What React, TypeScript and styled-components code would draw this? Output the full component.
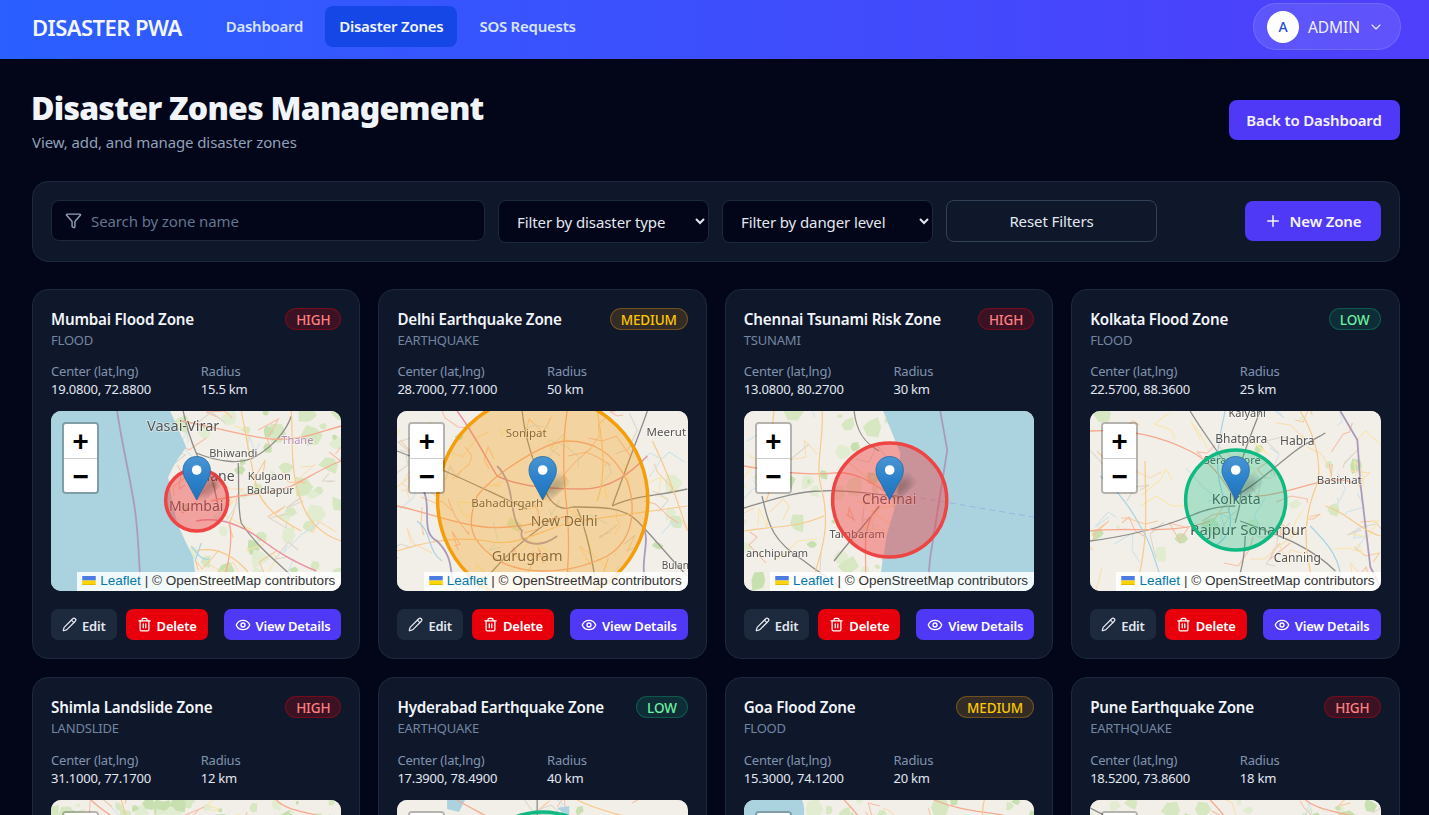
// App.tsx
import React from 'react';
import styled, { createGlobalStyle } from 'styled-components';
import { ChevronDown, Eye, Filter, Pencil, Plus, Trash2 } from 'lucide-react';

type Level = 'HIGH' | 'MEDIUM' | 'LOW';
type RoadKind = 'motorway' | 'trunk' | 'primary' | 'rail' | 'border' | 'river' | 'sea';
type Label = [string, number, number, number, string?];

interface Scene {
  seed: number;
  radius: number;
  blobs: number;
  minor: number;
  water: string[];
  roads: [RoadKind, string][];
  labels: Label[];
}

interface Zone {
  name: string;
  type: string;
  level: Level;
  center: string;
  radius: string;
  scene: Scene;
}

const levelColors: Record<Level, { text: string; bg: string; border: string; circle: string; fill: number }> = {
  HIGH: { text: '#ff7f7f', bg: 'rgba(231,0,11,0.2)', border: 'rgba(231,0,11,0.35)', circle: '#ef4444', fill: 0.45 },
  MEDIUM: { text: '#fdc700', bg: 'rgba(245,158,11,0.16)', border: 'rgba(245,158,11,0.32)', circle: '#f59e0b', fill: 0.33 },
  LOW: { text: '#6ff0a0', bg: 'rgba(16,185,129,0.14)', border: 'rgba(16,185,129,0.32)', circle: '#10b981', fill: 0.3 },
};

const roadStyles: Record<RoadKind, { color: string; width: number; dash?: string }> = {
  motorway: { color: '#e98fa0', width: 1.4 },
  trunk: { color: '#f6a98e', width: 1.3 },
  primary: { color: '#f8c98a', width: 1.2 },
  rail: { color: '#8f8d88', width: 1.3 },
  border: { color: '#ab9bbb', width: 1.8 },
  river: { color: '#a9d3e4', width: 1.2 },
  sea: { color: '#9db4e0', width: 1, dash: '6 4' },
};

const scenes: Record<string, Scene> = {
  mumbai: {
    seed: 11,
    radius: 31,
    blobs: 110,
    minor: 60,
    water: ['M0 0H119L128 20L135 36L124 52L117 66L121 90L126 112L135 132L142 146L146 180H0Z'],
    roads: [
      ['border', 'M66 0C72 40 80 70 84 100C88 130 88 160 90 180'],
      ['rail', 'M132 0C136 20 140 30 145 42C150 55 158 60 162 72L168 100'],
      ['rail', 'M145 42C165 50 190 55 205 45C222 35 235 20 240 5'],
      ['rail', 'M187 52C188 75 186 95 190 112C205 135 225 150 240 165'],
      ['motorway', 'M145 110C170 105 190 115 205 125C225 140 240 150 265 160'],
      ['trunk', 'M130 10C160 15 190 25 220 28C250 30 270 20 290 15'],
      ['trunk', 'M160 90C190 82 215 85 240 75C260 65 275 55 290 50'],
      ['trunk', 'M178 110C182 130 178 150 170 180'],
      ['primary', 'M190 0C195 25 198 45 205 75C210 95 230 110 250 120'],
      ['primary', 'M145 140C165 135 185 145 200 165'],
      ['primary', 'M240 0C242 30 238 60 250 90C256 110 272 125 290 130'],
      ['river', 'M140 135C146 142 150 150 158 148M150 132L144 150'],
    ],
    labels: [
      ['Vasai-Virar', 132, 20, 14.5], ['Bhiwandi', 182, 46, 11], ['Thane', 246, 33, 11, '#b48bb0'],
      ['Thane', 163, 70, 14], ['Kulgaon', 218, 69, 11], ['Badlapur', 219, 83, 11], ['Mumbai', 145, 100, 14],
    ],
  },
  delhi: {
    seed: 23,
    radius: 105,
    blobs: 8,
    minor: 70,
    water: [],
    roads: [
      ['rail', 'M125 0C128 30 138 55 148 80C155 95 165 100 175 96'],
      ['rail', 'M0 40C40 55 80 75 130 98'],
      ['rail', 'M175 96C200 96 225 95 240 110C255 125 275 150 290 165'],
      ['rail', 'M215 95C235 85 260 85 290 78'],
      ['rail', 'M180 98C190 120 195 150 200 180'],
      ['rail', 'M160 105C130 125 100 150 80 180'],
      ['rail', 'M250 0C245 15 235 40 215 95'],
      ['motorway', 'M60 0C75 20 85 40 100 65C120 75 150 78 185 78C215 78 235 60 250 45'],
      ['trunk', 'M170 30C150 30 100 60 80 85C68 115 75 130 95 145C120 165 170 165 210 145C235 130 240 100 230 70C215 40 195 30 170 30'],
      ['trunk', 'M170 0C165 30 165 60 170 100C172 130 172 150 168 180'],
      ['trunk', 'M0 95C25 100 50 110 80 115C110 120 140 112 170 105'],
      ['primary', 'M0 140C30 130 60 125 90 130C120 138 150 115 180 110C220 105 255 100 290 95'],
      ['primary', 'M200 0C205 30 210 60 200 90'],
      ['primary', 'M255 30C270 60 280 90 290 120'],
      ['border', 'M20 70C40 90 20 120 40 130C60 150 50 165 60 180'],
      ['border', 'M100 55C120 75 110 105 125 120C120 130 140 140 160 125'],
      ['border', 'M245 115C255 130 240 150 250 180'],
      ['river', 'M20 110C35 120 30 140 45 150'],
    ],
    labels: [
      ['Sonipat', 129, 26, 11.5], ['Meerut', 269, 25, 11.5], ['Bahadurgarh', 110, 96, 11.5],
      ['New Delhi', 167, 115, 14], ['Gurugram', 130, 150, 14.5], ['Bulan', 278, 158, 10],
    ],
  },
  chennai: {
    seed: 37,
    radius: 57,
    blobs: 60,
    minor: 55,
    water: ['M139 0H290V180H134L139 146L143 122L153 89L156 42Z'],
    roads: [
      ['border', 'M196 0L203 39L186 146L183 180'],
      ['sea', 'M176 87C210 92 250 100 290 106'],
      ['rail', 'M0 97C25 90 50 80 78 80C100 78 130 84 153 85'],
      ['rail', 'M110 0C112 20 120 32 135 40'],
      ['rail', 'M135 95C120 115 105 130 90 150'],
      ['rail', 'M18 85C25 115 28 130 60 150C75 162 90 170 100 180'],
      ['trunk', 'M0 55C30 60 60 65 90 62C110 60 125 70 140 80'],
      ['trunk', 'M130 100C115 125 125 150 120 180'],
      ['primary', 'M78 0C80 30 70 55 78 80C85 110 82 130 65 180'],
      ['primary', 'M30 0C25 30 35 60 22 90'],
      ['primary', 'M0 120C25 115 50 118 80 105'],
      ['river', 'M30 165C40 155 55 170 70 165'],
    ],
    labels: [['Chennai', 145, 93, 14], ['Tambaram', 113, 127, 11], ['anchipuram', 33, 146, 11]],
  },
  kolkata: {
    seed: 51,
    radius: 50,
    blobs: 14,
    minor: 70,
    water: [],
    roads: [
      ['border', 'M250 0L267 29L270 72L280 156L290 176'],
      ['rail', 'M100 0C115 25 135 50 150 75C152 90 148 100 145 112'],
      ['rail', 'M170 0C160 25 150 50 145 75'],
      ['rail', 'M145 85C165 75 185 55 205 40C215 32 225 28 235 22'],
      ['rail', 'M0 130C40 125 75 115 100 105C115 98 130 95 145 95'],
      ['rail', 'M150 110C190 125 220 135 245 160'],
      ['rail', 'M155 125C155 145 150 165 145 180'],
      ['trunk', 'M0 20C40 18 70 25 100 40C120 50 135 70 145 90'],
      ['trunk', 'M0 120C40 115 80 125 120 110'],
      ['trunk', 'M165 85C200 85 240 60 262 72'],
      ['primary', 'M55 50C55 90 60 130 45 180'],
      ['primary', 'M210 0C225 25 230 50 228 70C215 100 210 130 225 180'],
      ['primary', 'M235 95C255 100 270 120 290 125'],
      ['river', 'M135 0C128 30 122 60 135 90C145 110 140 125 125 135'],
      ['river', 'M50 115C60 130 65 150 75 180'],
      ['river', 'M10 65C30 80 45 105 50 115'],
      ['river', 'M220 115C235 130 255 150 250 180'],
    ],
    labels: [
      ['Kalyani', 157, 6, 11], ['Bhatpara', 151, 32, 12], ['Habra', 207, 34, 12], ['Serampore', 142, 53, 11],
      ['Basirhat', 249, 73, 11.5], ['Kolkata', 146, 93, 14], ['Rajpur Sonarpur', 158, 124, 15], ['Canning', 207, 151, 12],
    ],
  },
  shimla: {
    seed: 67,
    radius: 24,
    blobs: 260,
    minor: 50,
    water: [],
    roads: [['trunk', 'M40 0C60 20 90 30 120 60'], ['primary', 'M70 0C80 25 70 45 90 70'], ['trunk', 'M225 0C240 15 265 10 290 25']],
    labels: [],
  },
  hyderabad: {
    seed: 79,
    radius: 77,
    blobs: 12,
    minor: 50,
    water: ['M50 0H68L62 12L50 9Z', 'M160 8L172 6L172 18Z'],
    roads: [['trunk', 'M60 0C90 18 125 30 140 60'], ['rail', 'M140 0V40'], ['primary', 'M180 0C210 15 250 20 290 30']],
    labels: [],
  },
  goa: {
    seed: 83,
    radius: 40,
    blobs: 120,
    minor: 50,
    water: ['M0 0H58C64 15 56 30 50 60H0Z'],
    roads: [['trunk', 'M100 0C120 20 130 40 140 60'], ['trunk', 'M190 0C225 15 260 10 290 25'], ['primary', 'M240 0C235 20 240 40 250 60']],
    labels: [],
  },
  pune: {
    seed: 97,
    radius: 36,
    blobs: 140,
    minor: 50,
    water: [],
    roads: [['rail', 'M0 8C20 18 35 25 45 40'], ['trunk', 'M120 0C140 20 150 40 170 60'], ['trunk', 'M215 0C235 15 265 12 290 25']],
    labels: [],
  },
};

const zones: Zone[] = [
  { name: 'Mumbai Flood Zone', type: 'FLOOD', level: 'HIGH', center: '19.0800, 72.8800', radius: '15.5 km', scene: scenes.mumbai },
  { name: 'Delhi Earthquake Zone', type: 'EARTHQUAKE', level: 'MEDIUM', center: '28.7000, 77.1000', radius: '50 km', scene: scenes.delhi },
  { name: 'Chennai Tsunami Risk Zone', type: 'TSUNAMI', level: 'HIGH', center: '13.0800, 80.2700', radius: '30 km', scene: scenes.chennai },
  { name: 'Kolkata Flood Zone', type: 'FLOOD', level: 'LOW', center: '22.5700, 88.3600', radius: '25 km', scene: scenes.kolkata },
  { name: 'Shimla Landslide Zone', type: 'LANDSLIDE', level: 'HIGH', center: '31.1000, 77.1700', radius: '12 km', scene: scenes.shimla },
  { name: 'Hyderabad Earthquake Zone', type: 'EARTHQUAKE', level: 'LOW', center: '17.3900, 78.4900', radius: '40 km', scene: scenes.hyderabad },
  { name: 'Goa Flood Zone', type: 'FLOOD', level: 'MEDIUM', center: '15.3000, 74.1200', radius: '20 km', scene: scenes.goa },
  { name: 'Pune Earthquake Zone', type: 'EARTHQUAKE', level: 'HIGH', center: '18.5200, 73.8600', radius: '18 km', scene: scenes.pune },
];

function seeded(seed: number) {
  let s = seed;
  return () => {
    s = (s * 9301 + 49297) % 233280;
    return s / 233280;
  };
}

// tile texture: minor roads and patches of green, same every render
function minorRoads(seed: number, count: number) {
  const next = seeded(seed);
  const colors = ['#fbdcae', '#f8c89a', '#cfe3ea', '#f7bda5', '#dcd6c8', '#f9e6a8'];
  return Array.from({ length: count }, (_, i) => {
    const x = next() * 290;
    const y = next() * 180;
    const d = `M${x.toFixed(0)} ${y.toFixed(0)}l${(next() * 30 - 15).toFixed(0)} ${(next() * 30 - 15).toFixed(0)}l${(next() * 40 - 20).toFixed(0)} ${(next() * 40 - 20).toFixed(0)}l${(next() * 40 - 20).toFixed(0)} ${(next() * 40 - 20).toFixed(0)}`;
    return { d, color: colors[i % colors.length] };
  });
}

function greenBlobs(seed: number, count: number) {
  const next = seeded(seed * 7 + 3);
  const colors = ['#e2ecd0', '#d6e7c2', '#c8e0b0'];
  return Array.from({ length: count }, (_, i) => {
    const cx = next() * 290;
    const cy = next() * 180;
    const size = 2 + next() * 8;
    const points = Array.from({ length: 6 }, (_, k) => {
      const a = (k / 6) * Math.PI * 2;
      const r = size * (0.6 + next() * 0.7);
      return `${(cx + Math.cos(a) * r).toFixed(1)},${(cy + Math.sin(a) * r).toFixed(1)}`;
    }).join(' ');
    return { points, color: colors[i % colors.length] };
  });
}

function MapTile({ scene, level, id }: { scene: Scene; level: Level; id: string }) {
  const { circle, fill } = levelColors[level];
  return (
    <MapSvg viewBox="0 0 290 180" preserveAspectRatio="none">
      <defs>
        <linearGradient id={`pin-${id}`} x1="0" y1="0" x2="0" y2="1">
          <stop offset="0" stopColor="#4a95d3" />
          <stop offset="0.55" stopColor="#2a80ca" />
          <stop offset="1" stopColor="#2273b8" />
        </linearGradient>
        <filter id={`soft-${id}`}>
          <feGaussianBlur stdDeviation="4" />
        </filter>
      </defs>
      <TileLayer>
        <rect width="290" height="180" fill="#f2efe9" />
        {greenBlobs(scene.seed, scene.blobs).map((b) => (
          <polygon key={b.points} points={b.points} fill={b.color} />
        ))}
        {minorRoads(scene.seed, scene.minor).map((r) => (
          <path key={r.d} d={r.d} fill="none" stroke={r.color} strokeWidth="1" />
        ))}
        {scene.water.map((d) => (
          <path key={d} d={d} fill="#aad3df" />
        ))}
        {scene.roads.map(([kind, d]) => (
          <path
            key={d}
            d={d}
            fill="none"
            stroke={roadStyles[kind].color}
            strokeWidth={roadStyles[kind].width}
            strokeDasharray={roadStyles[kind].dash}
          />
        ))}
        {scene.labels.map(([text, x, y, size, tint]) => (
          <MapLabel key={text + x} x={x} y={y} fontSize={size} fill={tint ?? '#55534f'}>
            {text}
          </MapLabel>
        ))}
      </TileLayer>
      <circle cx="145.5" cy="89" r={scene.radius} fill={circle} fillOpacity={fill} stroke={circle} strokeWidth="3.5" />
      <ellipse cx="157" cy="76" rx="13" ry="6" fill="#000" opacity="0.28" transform="rotate(-42 157 76)" filter={`url(#soft-${id})`} />
      <path
        d="M145.5 45.5C137.500 45.500 131.800 51.500 131.800 59.300C131.800 64.500 134 68 136.500 72L145.500 89L154.500 72C157 68 159.200 64.500 159.200 59.300C159.200 51.500 153.500 45.500 145.500 45.500Z"
        fill={`url(#pin-${id})`}
        stroke="#24699f"
        strokeWidth="0.8"
      />
      <circle cx="145.500" cy="59" r="4.800" fill="#fff" />
    </MapSvg>
  );
}

function ZoneCard({ zone, id }: { zone: Zone; id: string }) {
  return (
    <Card>
      <CardHead>
        <ZoneName>{zone.name}</ZoneName>
        <LevelBadge $level={zone.level}>{zone.level}</LevelBadge>
      </CardHead>
      <ZoneType>{zone.type}</ZoneType>
      <Stats>
        <Stat>
          <StatLabel>Center (lat,lng)</StatLabel>
          <StatValue>{zone.center}</StatValue>
        </Stat>
        <Stat>
          <StatLabel>Radius</StatLabel>
          <StatValue>{zone.radius}</StatValue>
        </Stat>
      </Stats>
      <MapFrame>
        <MapTile scene={zone.scene} level={zone.level} id={id} />
        <ZoomControl>
          <ZoomButton>+</ZoomButton>
          <ZoomButton>−</ZoomButton>
        </ZoomControl>
        <Attribution>
          <svg width="14" height="9" viewBox="0 0 12 8">
            <path fill="#4C7BE1" d="M0 0h12v4H0z" />
            <path fill="#FFD500" d="M0 4h12v3H0z" />
            <path fill="#E0BC00" d="M0 7h12v1H0z" />
          </svg>
          <a>Leaflet</a>
          <span>| © OpenStreetMap contributors</span>
        </Attribution>
      </MapFrame>
      <Actions>
        <ActionGroup>
          <ActionButton $variant="edit">
            <Pencil size={15} />
            Edit
          </ActionButton>
          <ActionButton $variant="delete">
            <Trash2 size={15} />
            Delete
          </ActionButton>
        </ActionGroup>
        <ActionButton $variant="view">
          <Eye size={16} />
          View Details
        </ActionButton>
      </Actions>
    </Card>
  );
}

export default function App() {
  return (
    <>
      <GlobalStyle />
      <TopBar>
        <Logo>DISASTER PWA</Logo>
        <Nav>
          <NavLink>Dashboard</NavLink>
          <NavLink $active>Disaster Zones</NavLink>
          <NavLink>SOS Requests</NavLink>
        </Nav>
        <UserPill>
          <Avatar>A</Avatar>
          <UserName>ADMIN</UserName>
          <ChevronDown size={16} strokeWidth={1.6} />
        </UserPill>
      </TopBar>
      <Page>
        <PageHead>
          <div>
            <Title>Disaster Zones Management</Title>
            <Subtitle>View, add, and manage disaster zones</Subtitle>
          </div>
          <BackButton>Back to Dashboard</BackButton>
        </PageHead>
        <Toolbar>
          <Filters>
            <SearchBox>
              <Filter size={17} />
              <SearchInput placeholder="Search by zone name" />
            </SearchBox>
            <FilterSelect defaultValue="type">
              <option value="type">Filter by disaster type</option>
            </FilterSelect>
            <FilterSelect defaultValue="level">
              <option value="level">Filter by danger level</option>
            </FilterSelect>
            <ResetButton>Reset Filters</ResetButton>
          </Filters>
          <NewZoneButton>
            <Plus size={18} />
            New Zone
          </NewZoneButton>
        </Toolbar>
        <CardGrid>
          {zones.map((zone, i) => (
            <ZoneCard key={zone.name} zone={zone} id={String(i)} />
          ))}
        </CardGrid>
      </Page>
    </>
  );
}

// Styled Components
const GlobalStyle = createGlobalStyle`
  html, body {
    margin: 0;
    background: #020618;
    font-family: "Noto Sans", "Open Sans", sans-serif;
    scrollbar-width: none;
  }
  ::-webkit-scrollbar {
    display: none;
  }
  * {
    box-sizing: border-box;
  }
`;

const TopBar = styled.header`
  height: 59px;
  display: flex;
  align-items: center;
  padding: 0 28px 6px 32px;
  background: linear-gradient(90deg, #2b5fff, #4f3ffb);
`;

const Logo = styled.div`
  font-size: 22px;
  font-weight: 600;
  letter-spacing: -0.55px;
  color: #f4f7ff;
  margin-right: 30px;
`;

const Nav = styled.nav`
  display: flex;
  gap: 8px;
`;

const NavLink = styled.a<{ $active?: boolean }>`
  height: 41px;
  display: flex;
  align-items: center;
  padding: 0 14px 2px;
  border-radius: 8px;
  font-size: 15px;
  font-weight: 600;
  letter-spacing: -0.25px;
  color: ${(p) => (p.$active ? '#f1f5ff' : '#d9e4ff')};
  background: ${(p) => (p.$active ? '#1447e6' : 'transparent')};
`;

const UserPill = styled.div`
  margin-left: auto;
  height: 47px;
  width: 148px;
  display: flex;
  align-items: center;
  padding: 0 16px 0 13px;
  border-radius: 24px;
  border: 1px solid rgba(255, 255, 255, 0.12);
  background: rgba(255, 255, 255, 0.1);
  color: #eef0ff;
`;

const Avatar = styled.div`
  width: 32px;
  height: 32px;
  border-radius: 50%;
  background: #fff;
  color: #1d4fd8;
  display: flex;
  align-items: center;
  justify-content: center;
  font-size: 14px;
  font-weight: 500;
`;

const UserName = styled.span`
  font-size: 15.500px;
  letter-spacing: -0.1px;
  margin: 0 auto 0 9px;
`;

const Page = styled.main`
  padding: 0 29.500px 32px 32px;
`;

const PageHead = styled.div`
  display: flex;
  align-items: center;
  justify-content: space-between;
  padding-top: 26px;
  margin-bottom: 26px;
`;

const Title = styled.h1`
  margin: 0 0 0 -1px;
  font-size: 32px;
  line-height: 46px;
  font-weight: 900;
  letter-spacing: -0.75px;
  color: #f1f5f9;
`;

const Subtitle = styled.p`
  margin: -1px 0 1px;
  font-size: 15px;
  line-height: 24px;
  letter-spacing: -0.1px;
  color: #90a1b9;
`;

const BackButton = styled.button`
  width: 171px;
  height: 40px;
  border: none;
  border-radius: 8px;
  background: #4f39f6;
  color: #f5f3ff;
  font: 600 15px "Noto Sans", sans-serif;
  letter-spacing: -0.15px;
`;

const Toolbar = styled.section`
  height: 81px;
  display: flex;
  align-items: flex-start;
  justify-content: space-between;
  padding: 18px;
  border: 1px solid #1d293d;
  border-radius: 16px;
  background: #0f172b;
`;

const Filters = styled.div`
  display: grid;
  grid-template-columns: 434px repeat(3, 211px);
  gap: 13px;
  align-items: start;
`;

const SearchBox = styled.label`
  height: 41px;
  display: flex;
  align-items: center;
  gap: 7px;
  padding: 0 13px;
  border: 1px solid #1d293d;
  border-radius: 8px;
  background: #020618;
  color: #90a1b9;
`;

const SearchInput = styled.input`
  flex: 1;
  min-width: 0;
  border: none;
  outline: none;
  background: transparent;
  color: #e2e8f0;
  font: 15px "Noto Sans", sans-serif;
  letter-spacing: -0.1px;

  &::placeholder {
    color: #62748e;
    opacity: 1;
  }
`;

const FilterSelect = styled.select`
  height: 43px;
  padding: 0 10px 0 14px;
  border: 1px solid #1d293d;
  border-radius: 8px;
  background: #020618;
  color: #e2e8f0;
  font: 15px "Noto Sans", sans-serif;
  letter-spacing: -0.1px;
`;

const ResetButton = styled.button`
  height: 42px;
  border: 1px solid #314158;
  border-radius: 8px;
  background: transparent;
  color: #e2e8f0;
  font: 15px "Noto Sans", sans-serif;
  letter-spacing: -0.1px;
`;

const NewZoneButton = styled.button`
  width: 136px;
  height: 40px;
  margin-top: 1px;
  display: flex;
  align-items: center;
  justify-content: center;
  gap: 8px;
  border: none;
  border-radius: 8px;
  background: #4f39f6;
  color: #f5f3ff;
  font: 600 15px "Noto Sans", sans-serif;
  letter-spacing: -0.15px;
`;

const CardGrid = styled.section`
  display: grid;
  grid-template-columns: repeat(4, 1fr);
  gap: 18px;
  margin-top: 27px;
`;

const Card = styled.article`
  height: 370.490px;
  padding: 18px;
  border: 1px solid #1d293d;
  border-radius: 16px;
  background: #0f172b;
`;

const CardHead = styled.div`
  display: flex;
  align-items: flex-start;
  justify-content: space-between;
  height: 23px;
`;

const ZoneName = styled.h3`
  margin: 0;
  font-size: 15.200px;
  line-height: 23px;
  font-weight: 600;
  letter-spacing: -0.2px;
  color: #f1f5f9;
`;

const LevelBadge = styled.span<{ $level: Level }>`
  height: 22px;
  padding: 1px 10px 0;
  display: flex;
  align-items: center;
  border-radius: 11px;
  font-size: 13.500px;
  font-weight: 500;
  letter-spacing: -0.15px;
  color: ${(p) => levelColors[p.$level].text};
  background: ${(p) => levelColors[p.$level].bg};
  border: 1px solid ${(p) => levelColors[p.$level].border};
`;

const ZoneType = styled.div`
  font-size: 13px;
  line-height: 18px;
  letter-spacing: -0.2px;
  color: #7386a0;
`;

const Stats = styled.div`
  display: grid;
  grid-template-columns: 1fr 1fr;
  column-gap: 9px;
  margin-top: 13.100px;
`;

const Stat = styled.div`
  font-size: 13px;
  line-height: 18px;
  letter-spacing: -0.2px;
`;

const StatLabel = styled.div`
  color: #8093ad;
`;

const StatValue = styled.div`
  color: #e2e8f0;
`;

const MapFrame = styled.div`
  position: relative;
  height: 180px;
  margin-top: 13px;
  overflow: hidden;
  border-radius: 10px;
  background: #f2efe9;
`;

const MapSvg = styled.svg`
  display: block;
  width: 100%;
  height: 100%;
`;

const TileLayer = styled.g`
  filter: blur(0.55px);
`;

const MapLabel = styled.text`
  font-family: "Noto Sans", sans-serif;
  text-anchor: middle;
  paint-order: stroke;
  stroke: rgba(255, 255, 255, 0.5);
  stroke-width: 1.5px;
`;

const ZoomControl = styled.div`
  position: absolute;
  top: 11px;
  left: 11px;
  width: 37px;
  border: 2px solid rgba(0, 0, 0, 0.25);
  border-radius: 4px;
  background-clip: padding-box;
  overflow: hidden;
`;

const ZoomButton = styled.div`
  height: 34px;
  display: flex;
  align-items: center;
  justify-content: center;
  background: #fff;
  color: #000;
  font: bold 26px "DejaVu Sans Mono", monospace;

  & + & {
    border-top: 1px solid #ccc;
  }
`;

const Attribution = styled.div`
  position: absolute;
  right: 0;
  bottom: 0;
  height: 19px;
  display: flex;
  align-items: center;
  gap: 4px;
  padding: 0 6px 2px 5px;
  background: rgba(255, 255, 255, 0.85);
  color: #333;
  font: 13.500px / 1 "Liberation Sans", sans-serif;
  white-space: pre;

  a {
    color: #0078a8;
  }
`;

const Actions = styled.div`
  display: flex;
  justify-content: space-between;
  margin-top: 18px;
`;

const ActionGroup = styled.div`
  display: flex;
  gap: 9px;
`;

const actionColors = {
  edit: { bg: '#1d293d', text: '#e2e8f0' },
  delete: { bg: '#e7000b', text: '#ffffff' },
  view: { bg: '#4f39f6', text: '#ffffff' },
};

const ActionButton = styled.button<{ $variant: keyof typeof actionColors }>`
  height: 31px;
  display: flex;
  align-items: center;
  gap: 5px;
  padding: 2px 11px 0;
  border: none;
  border-radius: 7px;
  background: ${(p) => actionColors[p.$variant].bg};
  color: ${(p) => actionColors[p.$variant].text};
  font: 600 13px "Noto Sans", sans-serif;
  letter-spacing: -0.2px;

  svg {
    margin-top: -2px;
  }
`;
